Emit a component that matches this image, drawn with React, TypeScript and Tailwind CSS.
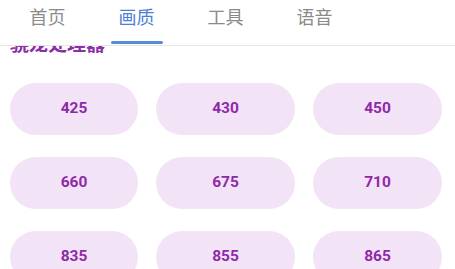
import React, { useState } from 'react';

const tabs = ['首页', '画质', '工具', '语音'];

const rows = [
  ['425', '430', '450'],
  ['660', '675', '710'],
  ['835', '855', '865'],
];

const widths = ['w-[128px]', 'w-[139px]', 'w-[129px]'];

const App: React.FC = () => {
  const [active, setActive] = useState(1);
  const [picked, setPicked] = useState<string | null>(null);

  return (
    <div
      className="w-[455px] h-[269px] overflow-hidden bg-white flex flex-col"
      style={{ fontFamily: 'Roboto, "Noto Sans", "Noto Sans CJK SC", sans-serif' }}
    >
      <div className="h-[46px] shrink-0 flex pl-[3px] border-b border-[#e6e6e6] relative z-10 bg-white">
        {tabs.map((t, i) => (
          <button
            key={t}
            onClick={() => setActive(i)}
            className={
              'relative h-full w-[89px] flex justify-center pt-[7px] text-[18px] leading-[22px] ' +
              (active === i ? 'text-[#4f7fd4]' : 'text-[#8a8a8a]')
            }
          >
            {t}
            {active === i && (
              <span className="absolute bottom-[1px] left-1/2 -translate-x-1/2 w-[52px] h-[3px] rounded-full bg-[#5a8ad8]" />
            )}
          </button>
        ))}
      </div>

      <div className="flex-1 overflow-hidden">
        <div className="-mt-[10px] px-[10px]">
          <h2 className="text-[19px] leading-[18px] font-bold text-[#8b2fa8] h-[18px]">骁龙处理器</h2>
          <div className="mt-[29px] flex flex-col gap-[22px]">
            {rows.map((row) => (
              <div key={row[0]} className="flex gap-[18px]">
                {row.map((n, j) => (
                  <button
                    key={n}
                    onClick={() => setPicked(n)}
                    className={
                      widths[j] +
                      ' h-[52px] rounded-full flex items-center justify-center text-[15.5px] font-bold ' +
                      (picked === n ? 'bg-[#e8c9ef] text-[#7b1fa2]' : 'bg-[#f3e3f7] text-[#8e2aa9]')
                    }
                  >
                    {n}
                  </button>
                ))}
              </div>
            ))}
          </div>
        </div>
      </div>
    </div>
  );
};

export default App;
